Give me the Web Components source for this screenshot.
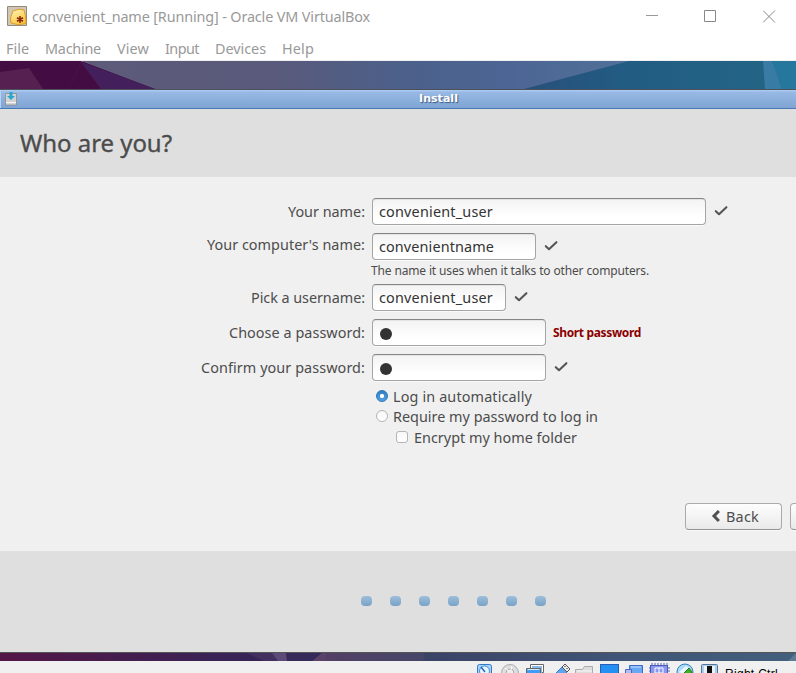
<!DOCTYPE html>
<html lang="en">
<head>
<meta charset="utf-8">
<title>convenient_name [Running] - Oracle VM VirtualBox</title>
<style>
html,body{margin:0;height:673px;overflow:hidden;background:#fff;font-family:"Noto Sans","Open Sans",sans-serif}
</style>
</head>
<body>
<vm-window></vm-window>
<script>
const define = (name, html, setup) => customElements.define(name, class extends HTMLElement {
  connectedCallback() {
    if (this.shadowRoot) return;
    const t = document.createElement('template');
    t.innerHTML = html;
    this.attachShadow({mode: 'open'}).append(t.content.cloneNode(true));
    if (setup) setup(this, this.shadowRoot);
  }
});

/* Text run whose tracking is adjusted to occupy w pixels */
define('fit-text', `<style>:host{display:inline-block;white-space:nowrap;line-height:1.2}span{display:inline-block}</style><span><slot></slot></span>`, (el, r) => {
  const w = +el.getAttribute('w'), s = r.querySelector('span');
  el.style.width = w + 'px';
  const nat = s.getBoundingClientRect().width, n = el.textContent.length;
  s.style.letterSpacing = ((w - nat) / n) + 'px';
});

define('check-mark', `<style>:host{display:block;width:14px;height:12px}svg{display:block}</style>
<svg width="14" height="12" viewBox="0 0 14 12"><path d="M1.8 6.2 5 9.2 12.4 2.2" fill="none" stroke="#555" stroke-width="2.1" stroke-linecap="round" stroke-linejoin="round"/></svg>`);

define('text-field', `<style>
:host{display:block;box-sizing:border-box;height:27px;border:1px solid #a5a5a5;border-top-color:#858585;border-radius:4px;background:linear-gradient(#f3f3f3,#fff 75%);box-shadow:0 1px 0 #fafafa,inset 0 1px 0 #e4e4e4;color:#333;font-size:14.4px;padding:3px 0 0 6px;overflow:hidden}
.dot{width:12px;height:12px;border-radius:50%;background:#333;margin:5px 0 0 .5px}
</style><slot></slot>`, (el, r) => {
  el.style.width = el.getAttribute('width') + 'px';
  if (el.hasAttribute('secret')) { const d = document.createElement('div'); d.className = 'dot'; r.append(d); }
});

define('form-row', `<style>
:host{display:grid;grid-template-columns:365px auto 1fr;column-gap:7px;height:27px;color:#4c4c4c;font-size:14.4px}
.l{display:flex;justify-content:flex-end;padding-top:5px}
:host([raised]) .l{padding-top:3px}
.s{padding:7px 0 0 1px}
:host([warn]) .s{padding:7px 0 0 0;line-height:1;font-size:12px}
</style><div class="l"><slot name="label"></slot></div><slot name="field"></slot><div class="s"><slot name="state"></slot></div>`);

define('option-row', `<style>
:host{display:flex;align-items:flex-start;color:#4c4c4c;font-size:14.4px;gap:5px;padding-left:376px;height:20px}
:host([check]){padding-left:396px;gap:6px}
i{display:block;box-sizing:border-box;flex:none;width:12px;height:12px;margin-top:2px;border:1px solid #b4b4b4;border-radius:50%;background:linear-gradient(#f8f8f8,#fff)}
:host([on]) i{border:1px solid #2b75b4;background:radial-gradient(circle at 50% 50%,#fff 0 1.7px,transparent 2.5px),linear-gradient(#2f7fc5,#55a2e2)}
:host([check]) i{border-radius:3px}
</style><i></i><slot></slot>`);

define('push-button', `<style>
:host{display:flex;box-sizing:border-box;width:97px;height:27px;flex:none;border:1px solid #aaa;border-bottom-color:#929292;border-radius:4px;background:linear-gradient(#fdfdfd,#eaeaea);box-shadow:0 1px 0 #fafafa;color:#4c4c4c;font-size:14.4px;padding:4px 0 0 25px;gap:6px}
svg{margin-top:2px;flex:none}
</style><svg width="9" height="13" viewBox="0 0 9 13"><path d="M7.900 1 3 6 7.900 11" fill="none" stroke="#505050" stroke-width="3"/></svg><slot></slot>`);

define('title-bar', `<style>
:host{display:flex;height:33px;background:#fff;color:#999;font-size:14.4px}
.i{margin:6px 0 0 7px;width:20px;height:20px}
fit-text{margin:8px 0 0 5px}
.c{margin:0 20px 0 auto;display:flex;gap:46px;padding-top:10px;height:13px}
svg{display:block}
</style>
<svg class="i" width="20" height="20" viewBox="0 0 20 20"><defs><linearGradient id="g" x1="0" y1="0" x2=".5" y2="1"><stop stop-color="#fff4c0"/><stop offset="1" stop-color="#f9c83c"/></linearGradient></defs><path d="M.5.5h19v19H.5z" fill="#cfc7b4" stroke="#948c7b"/><path d="M6 5 12 3.2 17 4 18.5 10 19 17.5 11 18.7 4 17 3.5 12z" fill="url(#g)" stroke="#e49b26"/><path d="M13 10v7M10 11.8l6 3.4M16 11.8l-6 3.4" stroke="#8a2817" stroke-width="1.6"/></svg>
<fit-text w="338">convenient_name [Running] - Oracle VM VirtualBox</fit-text>
<div class="c">
<svg width="13" height="13"><path d="M1 5.5h12" stroke="#999"/></svg>
<svg width="13" height="13"><path d="M.5.5h11v11H.5z" fill="none" stroke="#888"/></svg>
<svg width="13" height="13"><path d="M0 .5l12 12M12 .5l-12 12" stroke="#888"/></svg>
</div>`);

define('menu-bar', `<style>
:host{display:flex;box-sizing:border-box;gap:16px;height:28px;padding:7px 0 0 6px;background:#fff;border-bottom:1px solid #efefef;color:#999;font-size:14.4px}
</style><fit-text w="23">File</fit-text><fit-text w="56">Machine</fit-text><fit-text w="32">View</fit-text><fit-text w="34">Input</fit-text><fit-text w="51">Devices</fit-text><fit-text w="32">Help</fit-text>`);

define('wall-top', `<style>:host{display:block;height:28px}svg{display:block}</style>
<svg width="796" height="28" viewBox="0 0 796 28"><defs><linearGradient id="a"><stop stop-color="#605b79"/><stop offset=".35" stop-color="#595a7c"/><stop offset=".52" stop-color="#4b618b"/><stop offset=".64" stop-color="#4d6594"/><stop offset=".82" stop-color="#507399"/></linearGradient><linearGradient id="b" gradientUnits="userSpaceOnUse" x1="524" x2="796" y1="0" y2="0"><stop stop-color="#285079"/><stop offset=".35" stop-color="#225b83"/><stop offset=".85" stop-color="#236485"/></linearGradient></defs>
<path d="M0 0h796v28H0z" fill="url(#a)"/><path d="M0 0h81l74 28H0z" fill="#430d43"/><path d="M81 1l74 27h-54z" fill="#43205b"/><path d="M0 11 29 7l14 21H0z" fill="#562150"/><path d="M81 1 69 28" stroke="#4c184a" stroke-width=".6"/><path d="M81 0h17L81 1z" fill="#754e76"/>
<path d="M524 28 629 0h167v28z" fill="url(#b)"/><path d="M763 0h10l9 28h-17z" fill="#387ba5"/><path d="M772 0h24v28h-14z" fill="#25779d"/></svg>`);

define('wall-bottom', `<style>:host{display:block;height:8px}svg{display:block}</style>
<svg width="796" height="8" viewBox="0 0 796 8"><defs><linearGradient id="c" gradientUnits="userSpaceOnUse" x1="0" x2="796" y1="0" y2="0"><stop stop-color="#551548"/><stop offset=".15" stop-color="#451e4e"/><stop offset=".3" stop-color="#382457"/><stop offset=".4" stop-color="#342957"/><stop offset=".405" stop-color="#533f66"/><stop offset=".53" stop-color="#464668"/><stop offset=".535" stop-color="#3a4366"/><stop offset=".78" stop-color="#405577"/><stop offset="1" stop-color="#42607c"/></linearGradient></defs>
<path d="M0 0h796v8H0z" fill="url(#c)"/><path d="M247 0h26l6 8h-15z" fill="#44305f"/><path d="M272 0h14l1 8h-9z" fill="#5c4b78"/><path d="M287 0h35l-10 8h-25z" fill="#352a59"/><path d="M312 8l10-8h4v8z" fill="#5a4368"/><path d="M788 8l8-8v8z" fill="#5d7a94"/></svg>`);

define('install-bar', `<style>
:host{display:flex;box-sizing:border-box;height:20px;border-top:1px solid #4d5058;border-bottom:1px solid #4a78b4;background:linear-gradient(#a9c8f2 0 1px,#98b9e4 2px,#7fa5d4);box-shadow:inset 1px 0 #b4d2f5;font:bold 11px "DejaVu Sans",sans-serif;color:#fff;text-shadow:1px 1px 1px #3a5a86}
svg{display:block;margin:2px 0 0 5px}
.t{flex:1;padding:2px 0 0 402px}
</style><svg width="12" height="14" viewBox="0 0 12 14"><path d="M.5 1.500h11v11.500H.5z" fill="#d2d2d2" stroke="#8c8c8c" stroke-width=".8"/><path d="M1 10.500h10" stroke="#f5f5f5"/><path d="M4.500 0h3v4h2.500L6 8 2 4h2.500z" fill="#25a7cf"/></svg><div class="t"><fit-text w="39">Install</fit-text></div>`);

define('page-head', `<style>:host{display:block;box-sizing:border-box;height:68px;background:#dfdfdf;padding:17px 0 0 20px;color:#4c4c4c;font-size:24px;-webkit-text-stroke:.35px #4c4c4c}</style><slot></slot>`);

define('user-form', `<style>
:host{display:flex;flex-direction:column;box-sizing:border-box;height:374px;background:#f0f0f0;padding-top:21px;color:#4c4c4c}
form-row+form-row{margin-top:8px}
.hint{box-sizing:border-box;font-size:12px;line-height:16px;padding:3px 0 0 371px;height:24px}
.warn{color:#8b0000;font-weight:bold;font-size:12px}
.opts{padding-top:7px}
.nav{display:flex;gap:8px;margin-top:54px;padding-left:685px;overflow:hidden;height:30px}
</style>
<form-row><fit-text slot="label" w="77">Your name:</fit-text><text-field slot="field" width="334"><fit-text w="114">convenient_user</fit-text></text-field><check-mark slot="state"></check-mark></form-row>
<form-row raised><fit-text slot="label" w="158">Your computer's name:</fit-text><text-field slot="field" width="164"><fit-text w="115">convenientname</fit-text></text-field><check-mark slot="state"></check-mark></form-row>
<div class="hint"><fit-text w="278">The name it uses when it talks to other computers.</fit-text></div>
<form-row><fit-text slot="label" w="114">Pick a username:</fit-text><text-field slot="field" width="134"><fit-text w="114">convenient_user</fit-text></text-field><check-mark slot="state"></check-mark></form-row>
<form-row warn><fit-text slot="label" w="136">Choose a password:</fit-text><text-field slot="field" width="174" secret></text-field><fit-text class="warn" slot="state" w="88">Short password</fit-text></form-row>
<form-row><fit-text slot="label" w="164">Confirm your password:</fit-text><text-field slot="field" width="174" secret></text-field><check-mark slot="state"></check-mark></form-row>
<div class="opts">
<option-row on><fit-text w="139">Log in automatically</fit-text></option-row>
<option-row><fit-text w="205">Require my password to log in</fit-text></option-row>
<option-row check style="margin-top:1px"><fit-text w="163">Encrypt my home folder</fit-text></option-row>
</div>
<div class="nav"><push-button><fit-text w="33">Back</fit-text></push-button><push-button></push-button></div>`);

define('step-dots', `<style>
:host{display:flex;box-sizing:border-box;height:101px;background:#dfdfdf;padding:45px 0 0 361px;gap:18px}
i{width:11px;height:10px;border-radius:4px;background:linear-gradient(#9dbedb,#79a2c6)}
</style><i></i><i></i><i></i><i></i><i></i><i></i><i></i>`);

define('status-bar', `<style>
:host{display:flex;height:12px;background:#f0f0f0;overflow:hidden;padding-left:476px;font-size:12px;color:#000}
svg{display:block;flex:none}
fit-text{margin:6px 0 0 5px;font-family:"Liberation Sans",sans-serif}
</style>
<svg width="244" height="12" viewBox="0 0 244 12" fill="none">
<rect x="1.500" y="3.500" width="14" height="14" rx="2" fill="#a9d2fa" stroke="#3279c8"/><circle cx="8.500" cy="10" r="5" fill="#e8f5ff" stroke="#4790d8"/><path d="M5 6l4 5" stroke="#2468b8" stroke-width="1.500"/>
<circle cx="34" cy="12" r="8.500" fill="#dedede" stroke="#adadad"/><circle cx="34" cy="12" r="4" stroke="#aaa" fill="#eee"/><path d="M29 7l4 3M36 5l-1 4" stroke="#fff"/>
<path d="M54.500 3.500h13v8h-13z" fill="#fff" stroke="#666"/><path d="M56 5h10v7H56z" fill="#8bb9e8"/><path d="M50.500 7.500h14v8h-14z" fill="#3f9dfa" stroke="#666"/><path d="M51.500 8.500h12" stroke="#d5e9ff"/>
<path d="M79 13l7-7 5 5-3 3z" fill="#5da6ee" stroke="#397fc8"/><path d="M86 6l3-3 5 5-3 3z" fill="#ededed" stroke="#555"/><path d="M89 5v1M91 7v1" stroke="#222"/>
<path d="M99.500 12V8.500h7l2-3h8V12" fill="#ddd" stroke="#ababab"/><path d="M101 10h15" stroke="#f8f8f8"/>
<rect x="124.500" y="3.500" width="18" height="11" fill="#2490f4" stroke="#2460b4"/>
<path d="M153.500 4.500h13v9h-13z" fill="#69a8f5" stroke="#406bc7"/><path d="M149.500 8.500h6V15h-6z" fill="#b0bdf0" stroke="#5365c3"/><path d="M155 6h10" stroke="#c7e0ff"/>
<path d="M176 2v3M179 2v3M182 2v3M185 2v3M188 2v3M191 2v3M174 7h-1M174 10h-1M192 7h2M192 10h2" stroke="#5362ba"/><rect x="174.500" y="4.500" width="17" height="12" fill="#8998ed" stroke="#4c5bba"/><path d="M179 7h8v5h-8zM183 7v5" stroke="#fff"/>
<circle cx="209" cy="11" r="8" fill="#a9dcf8" stroke="#3a7eb8"/><path d="M203 11l7-6 4 3-6 5z" fill="#e9f8ff"/><path d="M208 12l5-5 3 4v3z" fill="#3cae28" stroke="#257e1a"/>
<rect x="225.500" y="3.500" width="16" height="14" rx="1" fill="#aecde8" stroke="#527799"/><rect x="228" y="5" width="11" height="9" fill="#e8f3fb"/><path d="M231 5h5v7h-5z" fill="#111"/>
</svg><fit-text w="53">Right Ctrl</fit-text>`);

define('vm-window', `<style>:host{display:flex;flex-direction:column;width:796px;height:673px;overflow:hidden}.edge{height:1px;background:#555;flex:none}title-bar,menu-bar,wall-top,install-bar,page-head,user-form,step-dots,wall-bottom,status-bar{flex:none}</style>
<title-bar></title-bar><menu-bar></menu-bar><wall-top></wall-top><install-bar></install-bar>
<page-head><fit-text w="152">Who are you?</fit-text></page-head>
<user-form></user-form><step-dots></step-dots><div class="edge"></div><wall-bottom></wall-bottom><status-bar></status-bar>`);
</script>
</body>
</html>
